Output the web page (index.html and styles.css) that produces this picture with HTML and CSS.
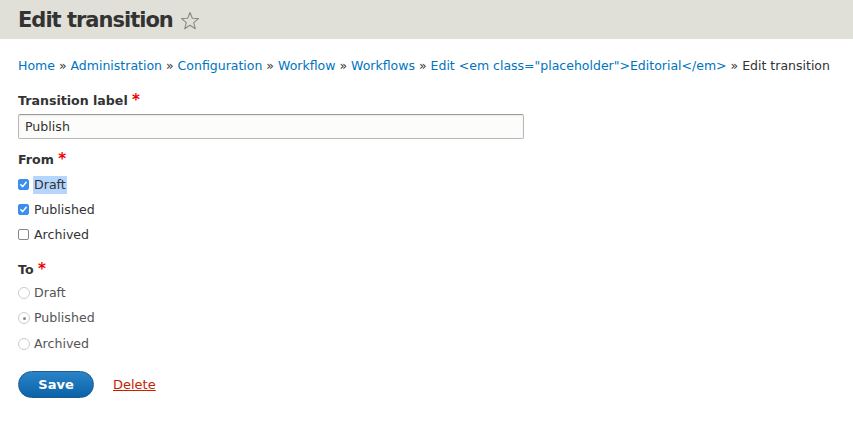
FILE: index.html
```html
<!DOCTYPE html>
<html>
<head>
<meta charset="utf-8">
<link rel="stylesheet" href="styles.css">
</head>
<body>
<header class="page-header">
  <h1 class="page-title">Edit transition <span class="star"><svg width="20" height="20" viewBox="0 0 20 20"><path d="M10 1.5 L12.3 7.3 L18.5 7.6 L13.7 11.6 L15.3 17.8 L10 14.3 L4.7 17.8 L6.3 11.6 L1.5 7.6 L7.7 7.3 Z" fill="none" stroke="#8a8a80" stroke-width="1.1" stroke-linejoin="round"/></svg></span></h1>
</header>
<main class="content">
  <nav class="breadcrumb">
    <a href="#">Home</a> » <a href="#">Administration</a> » <a href="#">Configuration</a> » <a href="#">Workflow</a> » <a href="#">Workflows</a> » <a href="#">Edit &lt;em class="placeholder"&gt;Editorial&lt;/em&gt;</a> » Edit transition
  </nav>
  <form class="form">
    <div class="field field-text">
      <label class="label">Transition label <span class="req">*</span></label>
      <input class="text-input" type="text" value="Publish">
    </div>
    <div class="field field-from">
      <div class="label">From <span class="req">*</span></div>
      <div class="options">
        <label class="option"><span class="cb checked"><svg width="9" height="9" viewBox="0 0 9 9"><path d="M1.8 4.8 L3.7 6.6 L7.2 2.3" fill="none" stroke="#fff" stroke-width="1.5" stroke-linecap="round" stroke-linejoin="round"/></svg></span><span class="sel">Draft</span></label>
        <label class="option"><span class="cb checked"><svg width="9" height="9" viewBox="0 0 9 9"><path d="M1.8 4.8 L3.7 6.6 L7.2 2.3" fill="none" stroke="#fff" stroke-width="1.5" stroke-linecap="round" stroke-linejoin="round"/></svg></span>Published</label>
        <label class="option"><span class="cb"></span>Archived</label>
      </div>
    </div>
    <div class="field field-to">
      <div class="label">To <span class="req">*</span></div>
      <div class="options radios">
        <label class="option"><span class="rb"></span>Draft</label>
        <label class="option"><span class="rb on"></span>Published</label>
        <label class="option"><span class="rb"></span>Archived</label>
      </div>
    </div>
    <div class="actions">
      <button type="button" class="btn-primary">Save</button>
      <a href="#" class="delete">Delete</a>
    </div>
  </form>
</main>
</body>
</html>
```
FILE: styles.css
```css
html, body { margin: 0; padding: 0; background: #fff; }
body { font-family: "DejaVu Sans", "Liberation Sans", sans-serif; font-size: 13px; color: #333; }
.page-header { background: #e0e0d8; height: 39px; display: flex; align-items: center; padding: 0 18px; }
.page-title { margin: 0; font-size: 21px; font-weight: bold; color: #333; display: flex; align-items: center; gap: 7px; letter-spacing: -1px; }
.star { display: inline-flex; margin-top: 2px; }
.content { padding: 0 18px; }
.breadcrumb { margin-top: 18px; line-height: 18px; color: #333; font-size: 12.5px; white-space: nowrap; }
.breadcrumb a { color: #0074bd; text-decoration: none; }
.form { margin-top: 18px; }
.label { display: block; font-weight: bold; color: #333; line-height: 16px; height: 16px; font-size: 12.6px; }
.req { color: #e00; font-size: 15px; line-height: 10px; }
.field-text { margin-bottom: 13px; }
.field-from { margin-bottom: 15px; }
.text-input { display: block; box-sizing: border-box; width: 506px; height: 25px; margin-top: 5px; border: 1px solid #b8b8b8; border-top-color: #999; border-radius: 2px; background: #fcfcfa; font-family: inherit; font-size: 12.6px; color: #333; padding: 0 6px; box-shadow: inset 0 1px 2px rgba(0,0,0,0.08); }
.options { display: flex; flex-direction: column; margin-top: 4px; }
.radios { margin-top: 2px; }
.option { display: flex; align-items: center; height: 25px; gap: 5px; font-size: 12.6px; line-height: 16px; color: #333; }
.radios .option { height: 25.5px; color: #555; gap: 4px; }
.cb { width: 11px; height: 11px; box-sizing: border-box; border: 1px solid #888; border-radius: 2px; background: #fff; display: inline-flex; align-items: center; justify-content: center; }
.cb.checked { background: #3a8ef0; border-color: #3a8ef0; }
.sel { background: #b4d5fe; padding: 1px 1px; margin-left: -1px; }
.rb { width: 12px; height: 12px; box-sizing: border-box; border: 1px solid #ccc; border-radius: 50%; background: #fff; display: inline-flex; align-items: center; justify-content: center; }
.rb.on::after { content: ""; width: 3px; height: 3px; border-radius: 50%; background: #888; }
.actions { display: flex; align-items: center; gap: 19px; margin-top: 14px; }
.btn-primary { width: 76px; height: 27px; border-radius: 14px; border: 1px solid #1e5c90; background: linear-gradient(#2b84c8, #0a63a8); color: #fff; font-family: inherit; font-weight: bold; font-size: 13px; padding: 0; }
.delete { color: #c72100; text-decoration: underline; font-size: 13px; }
```
